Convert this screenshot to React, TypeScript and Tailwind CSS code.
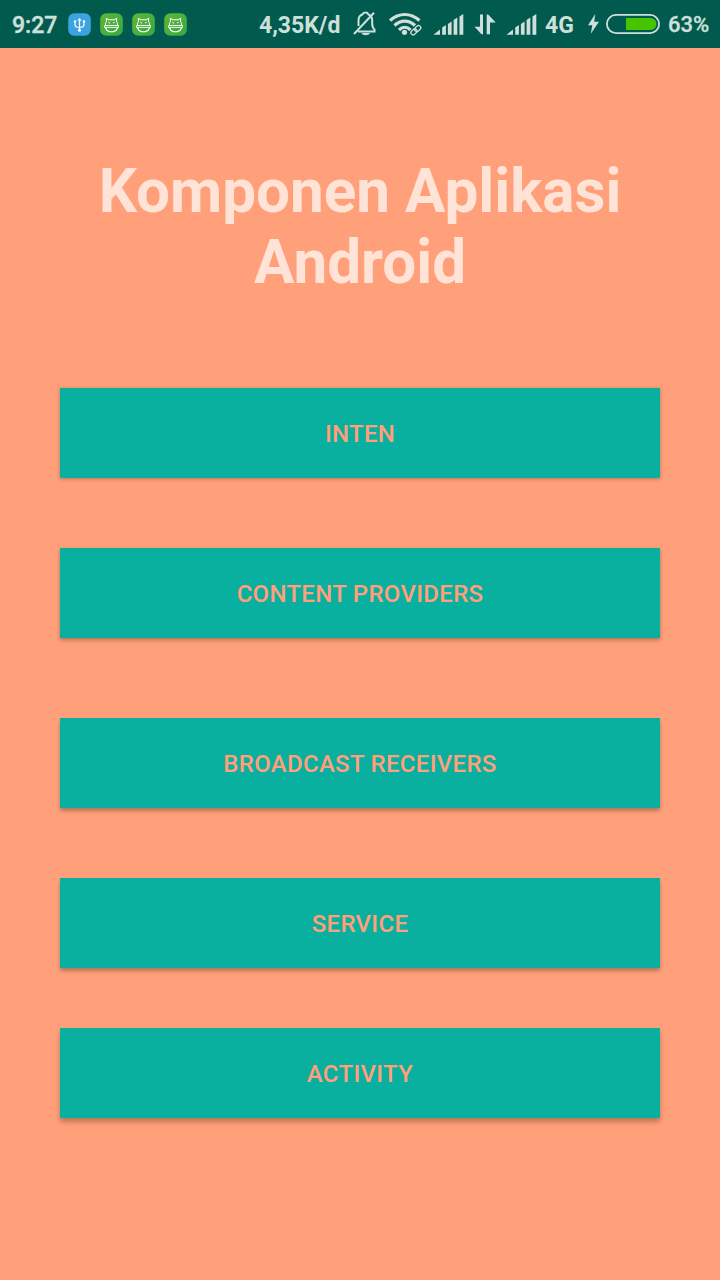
import type { ReactNode } from "react";

const buttons = [
  { label: "INTEN", gap: "mt-[90px]", shadow: "shadow-[0_1px_4px_rgba(0,0,0,0.28)]" },
  { label: "CONTENT PROVIDERS", gap: "mt-[70px]", shadow: "shadow-[0_2px_4px_rgba(0,0,0,0.3)]" },
  { label: "BROADCAST RECEIVERS", gap: "mt-20", shadow: "shadow-[0_3px_4px_rgba(0,0,0,0.28)]" },
  { label: "SERVICE", gap: "mt-[70px]", shadow: "shadow-[0_3px_4px_rgba(0,0,0,0.28)]" },
  { label: "ACTIVITY", gap: "mt-[60px]", shadow: "shadow-[0_4px_5px_rgba(0,0,0,0.26)]" },
];

const INK = "#cfe0dc";

function UsbBadge() {
  return (
    <svg width="23" height="23" viewBox="0 0 23 23" fill="none" stroke="#fff" strokeWidth="1.2">
      <rect x="0.2" y="0.2" width="22.6" height="22.6" rx="6" fill="#3ba4e0" stroke="none" />
      <path d="M11.5 6v12M7 8.5v3c0 2 1.5 3 4.5 3s4.5-1 4.5-3v-3" />
      <path d="M9.7 7.5l1.8-2.500 1.800 2.500z" fill="#fff" strokeWidth="0.3" />
      <circle cx="7" cy="8.5" r="1.2" fill="#fff" stroke="none" />
      <path d="M14.9 7.300h2.200v2.200h-2.200z" fill="#fff" stroke="none" />
      <circle cx="11.5" cy="17.3" r="1.5" fill="#fff" stroke="none" />
    </svg>
  );
}

function BotBadge() {
  return (
    <svg width="23" height="23" viewBox="0 0 23 23" fill="none" stroke="#fff" strokeLinejoin="round">
      <defs>
        <linearGradient id="bot" x1="0" y1="0" x2="1" y2="1">
          <stop offset="0" stopColor="#60b535" />
          <stop offset="1" stopColor="#38a843" />
        </linearGradient>
      </defs>
      <rect x="0.2" y="0.2" width="22.6" height="22.6" rx="6" fill="url(#bot)" stroke="none" />
      <path d="M5.500 12c0-1.800.4-2.800 1-3.700L6.300 5.300 9 6.800h5l2.700-1.500-.2 3c.6.900 1 1.900 1 3.700" />
      <path d="M5 12.500h13.500v1.900h-14v-1.900z" strokeWidth="0.9" />
      <path d="M5.500 14.500c.7 2.800 3 4.300 6 4.300s5.300-1.500 6-4.300" strokeWidth="1.1" />
      <path d="M8.300 9.200l1.700 1M14.700 9.200l-1.700 1" />
    </svg>
  );
}

/* Status icons share the bar's 48px height, so y runs from the top of the bar. */
function BarIcon({ x, w, children }: { x: number; w: number; children: ReactNode }) {
  return (
    <svg className="shrink-0" width={w} height="48" viewBox={`${x} 0 ${w} 48`} fill={INK}>
      {children}
    </svg>
  );
}

function Signal({ w }: { w: number }) {
  return (
    <BarIcon x={0} w={w}>
      <path d="M0.500 34.700L7 29.500V34.700zM9.200 27.500l3.700-2.500v9.700H9.200zM14.900 24l3.700-2.500v13.200h-3.700zM20.600 20l3.700-2.500v17.200h-3.700zM26.500 16.500l3.800-2.500v20.700h-3.800z" />
    </BarIcon>
  );
}

export default function App() {
  return (
    <div className="flex h-[1280px] w-[720px] flex-col bg-[#ffa07a] font-['Roboto',sans-serif]">
      <div className="flex h-12 items-center bg-[#005a4d] pl-3 text-[23px] font-bold leading-6 text-[#cfe0dc]">
        <span className="mt-1 w-[55px] shrink-0 font-medium [-webkit-text-stroke:0.4px]">9:27</span>
        <div className="flex shrink-0 gap-[9px] pl-[0.500px]">
          <UsbBadge />
          <BotBadge />
          <BotBadge />
          <BotBadge />
        </div>
        <span className="ml-[72.500px] mt-1 w-[94px] shrink-0 whitespace-nowrap">4,35K/d</span>
        <BarIcon x={353} w={36}>
          <g fill="none" stroke={INK} strokeWidth="2">
            <path d="M358 31.500h16.500v-2c-2-1.500-2.300-3-2.300-6v-3c0-3-1-4.500-2.500-5.500M370 15.500l-1.700-1.200c-.5-1.500-1-1.800-2.800-1.800s-2.700.8-3.200 2c-3 1-3.800 3.500-3.800 6v5.500" />
            <path d="M354 34L374 12.800" />
          </g>
          <path d="M361.500 33h8.500c-1 3-7.500 3-8.500 0z" />
        </BarIcon>
        <BarIcon x={389} w={44}>
          <g fill="none" stroke={INK} strokeWidth="3.200">
            <path d="M390 20.500c9-8 20.500-8 29.500 0" />
            <path d="M394.500 25.500c6-5.700 14.500-5.700 20.500 0" />
            <path d="M399 30c3.500-3.500 8-3.500 11.500 0" />
          </g>
          <circle cx="404.500" cy="32.300" r="2.600" />
          <g transform="rotate(-42 415.800 30.300)" fill="none" strokeLinecap="round">
            <path d="M410.500 30.300h11" stroke="#005a4d" strokeWidth="7" />
            <rect x="410" y="28" width="6.700" height="4.500" rx="2.250" stroke={INK} strokeWidth="1.300" />
            <rect x="415" y="28" width="6.700" height="4.500" rx="2.250" stroke={INK} strokeWidth="1.300" />
          </g>
        </BarIcon>
        <Signal w={32} />
        <BarIcon x={465} w={41}>
          <path d="M483 14.500V34.300h-1.500l-7-7.500h5.500V14.500zM486.700 34.300V14.500h1.500l7.500 8h-5.700v11.800z" />
        </BarIcon>
        <Signal w={32} />
        <span className="ml-[7px] mt-1 w-[43px] shrink-0">4G</span>
        <BarIcon x={588} w={18}>
          <path d="M595.300 14L588 25.300h4.300l-1.500 8.500 8.200-12h-4.800z" />
        </BarIcon>
        <BarIcon x={606} w={54}>
          <rect x="606.900" y="14.900" width="52.200" height="18.200" rx="9.100" fill="none" stroke={INK} strokeWidth="1.800" />
          <path d="M626 18h24.500a6 6 0 0 1 0 12H626z" fill="#47c400" />
        </BarIcon>
        <span className="ml-2 mt-0.5 text-[22px] font-medium [-webkit-text-stroke:0.3px]">63%</span>
      </div>
      <h1 className="mt-[108px] text-center text-[60.200px] font-bold leading-[71px] text-[#ffe3d7]">
        Komponen Aplikasi
        <br />
        Android
      </h1>
      <div className="flex flex-col px-[60px]">
        {buttons.map((b) => (
          <button
            key={b.label}
            className={`${b.gap} ${b.shadow} h-[90px] bg-[#09af9f] pt-px text-[24px] font-medium tracking-[0.3px] text-[#ffa07a]`}
          >
            {b.label}
          </button>
        ))}
      </div>
    </div>
  );
}
